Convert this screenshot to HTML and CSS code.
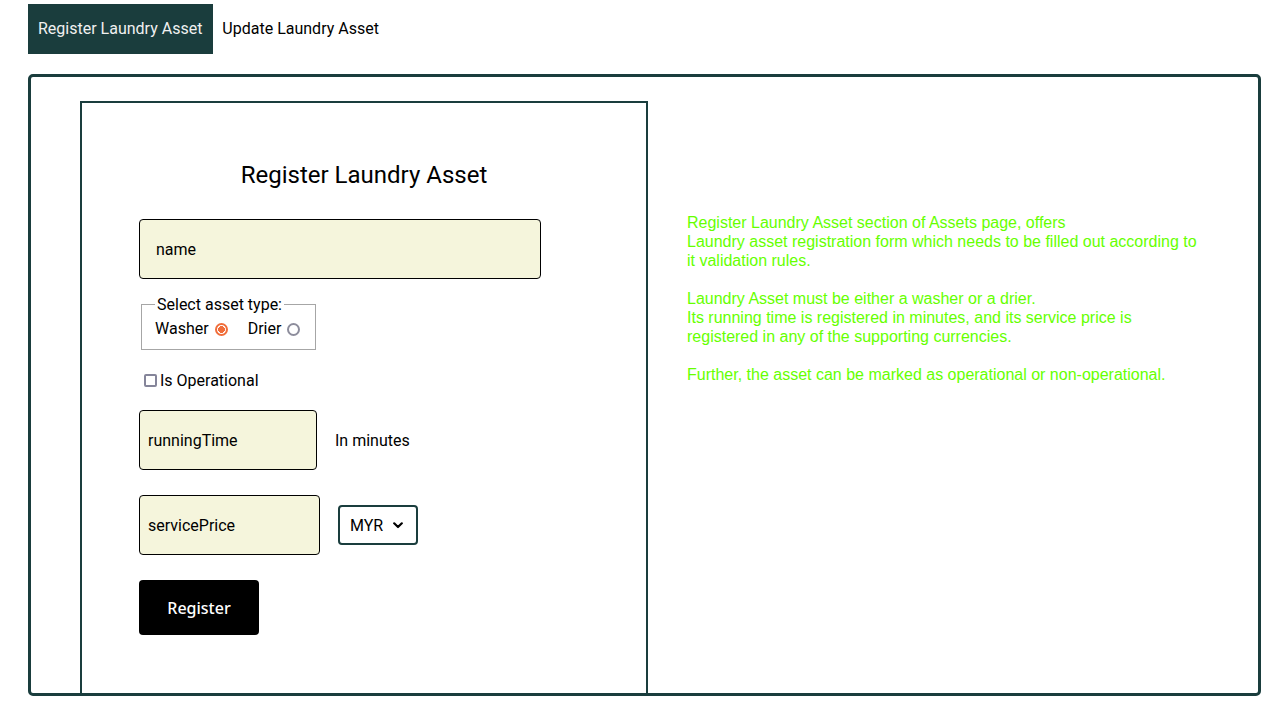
FILE: index.html
```html
<!DOCTYPE html>
<html lang="en">
<head>
<meta charset="utf-8">
<title>Assets</title>
<link rel="stylesheet" href="styles.css">
</head>
<body>
<div class="page">
  <nav class="tabs">
    <div class="tab active">Register Laundry Asset</div>
    <div class="tab">Update Laundry Asset</div>
  </nav>
  <main class="panel">
    <section class="form-box">
      <h2 class="title">Register Laundry Asset</h2>
      <form class="fields">
        <input class="field name-field" type="text" placeholder="name">
        <fieldset class="type-set">
          <legend>Select asset type:</legend>
          <label class="radio-label">Washer <input class="radio" type="radio" name="type" checked></label>
          <label class="radio-label drier">Drier <input class="radio" type="radio" name="type"></label>
        </fieldset>
        <label class="check-row"><input class="check" type="checkbox">Is Operational</label>
        <div class="row running">
          <input class="field small-field" type="text" placeholder="runningTime">
          <span class="hint">In minutes</span>
        </div>
        <div class="row price">
          <input class="field price-field" type="text" placeholder="servicePrice">
          <div class="select-wrap">
            <select class="currency"><option>MYR</option><option>USD</option></select>
            <svg class="chevron" width="10" height="7" viewBox="0 0 10 7" aria-hidden="true"><path d="M1.2 1.3 L5 5 L8.8 1.3" fill="none" stroke="#000" stroke-width="2.2" stroke-linecap="round" stroke-linejoin="round"/></svg>
          </div>
        </div>
        <button class="submit" type="button">Register</button>
      </form>
    </section>
    <aside class="info">
      Register Laundry Asset section of Assets page, offers<br>
      Laundry asset registration form which needs to be filled out according to<br>
      it validation rules.<br>
      <br>
      Laundry Asset must be either a washer or a drier.<br>
      Its running time is registered in minutes, and its service price is<br>
      registered in any of the supporting currencies.<br>
      <br>
      Further, the asset can be marked as operational or non-operational.
    </aside>
  </main>
</div>
</body>
</html>
```

FILE: styles.css
```css
* { box-sizing: border-box; }
html, body { margin: 0; padding: 0; background: #fff; }
body { font-family: Roboto, "Liberation Sans", sans-serif; font-size: 16px; color: #000; }

.page { padding: 4px 21px 0 28px; }

.tabs { display: flex; height: 50px; }
.tab { display: flex; align-items: center; padding: 0 10px 2px 9px; line-height: 19px; color: #000; }
.tab.active { background: #1a3d3d; color: #f0f0f0; padding: 0 11px 2px 10px; }

.panel {
  margin-top: 20px;
  height: 622px;
  border: 3px solid #1a3d3d;
  border-radius: 5px;
  overflow: hidden;
  display: flex;
  align-items: flex-start;
  padding: 24px 0 0 49px;
}

.form-box {
  flex: none;
  width: 568px;
  height: 640px;
  border: 2px solid #1a3d3d;
  padding-top: 58px;
}

.title {
  margin: 0;
  text-align: center;
  font-size: 24px;
  font-weight: 400;
  line-height: 28px;
}

.fields {
  margin: 30px 0 0 57px;
  display: flex;
  flex-direction: column;
  align-items: flex-start;
}

.field {
  height: 60px;
  background: #f5f5dc;
  border: 1px solid #000;
  border-radius: 4px;
  font-family: Roboto, sans-serif;
  font-size: 16px;
  color: #000;
  padding: 0 8px;
  outline: none;
}
.field::placeholder { color: #000; opacity: 1; }
.name-field { width: 402px; padding-left: 16px; }
.small-field { width: 178px; }
.price-field { width: 181px; }

.type-set {
  margin: 16px 0 0 2px;
  width: 175px;
  border: 1px solid #a6a6a6;
  padding: 5px 12px 11px 13px;
  display: flex;
}
.type-set legend { padding: 0 2px; line-height: 19px; font-size: 16px; }
.radio-label { display: flex; align-items: center; line-height: 19px; }
.radio-label.drier { margin-left: 20px; }

.radio {
  appearance: none;
  margin: 1px 0 0 6px;
  width: 13px;
  height: 13px;
  border: 2px solid #8d8d9c;
  border-radius: 50%;
  background: #fff;
}
.radio:checked {
  border-color: #f06d3a;
  background: radial-gradient(circle, #f06d3a 0 3.2px, #fff 3.6px);
}

.check-row { margin-top: 21px; display: flex; align-items: center; line-height: 19px; }
.check {
  appearance: none;
  margin: 0 3px 0 5px;
  width: 13px;
  height: 13px;
  border: 2px solid #85859a;
  border-radius: 2px;
  background: #fff;
}

.row { display: flex; align-items: center; gap: 18px; }
.running { margin-top: 20px; }
.price { margin-top: 25px; }

.select-wrap { position: relative; width: 80px; height: 40px; }
.currency {
  appearance: none;
  width: 80px;
  height: 40px;
  border: 2px solid #1a3d3d;
  border-radius: 4px;
  background: #fff;
  font-family: Roboto, sans-serif;
  font-size: 16px;
  color: #000;
  padding: 0 0 0 10px;
}
.chevron { position: absolute; left: 55px; top: 17px; pointer-events: none; }

.submit {
  margin-top: 25px;
  width: 120px;
  height: 55px;
  border: none;
  border-radius: 4px;
  background: #000;
  color: #fff;
  font-family: "Noto Sans", "Open Sans", sans-serif;
  font-size: 16px;
  font-weight: 500;
  cursor: pointer;
}

.info {
  margin: 112px 0 0 39px;
  font-family: "Liberation Sans", Arial, sans-serif;
  font-size: 16px;
  line-height: 19px;
  color: #66ff00;
  white-space: nowrap;
}
```
